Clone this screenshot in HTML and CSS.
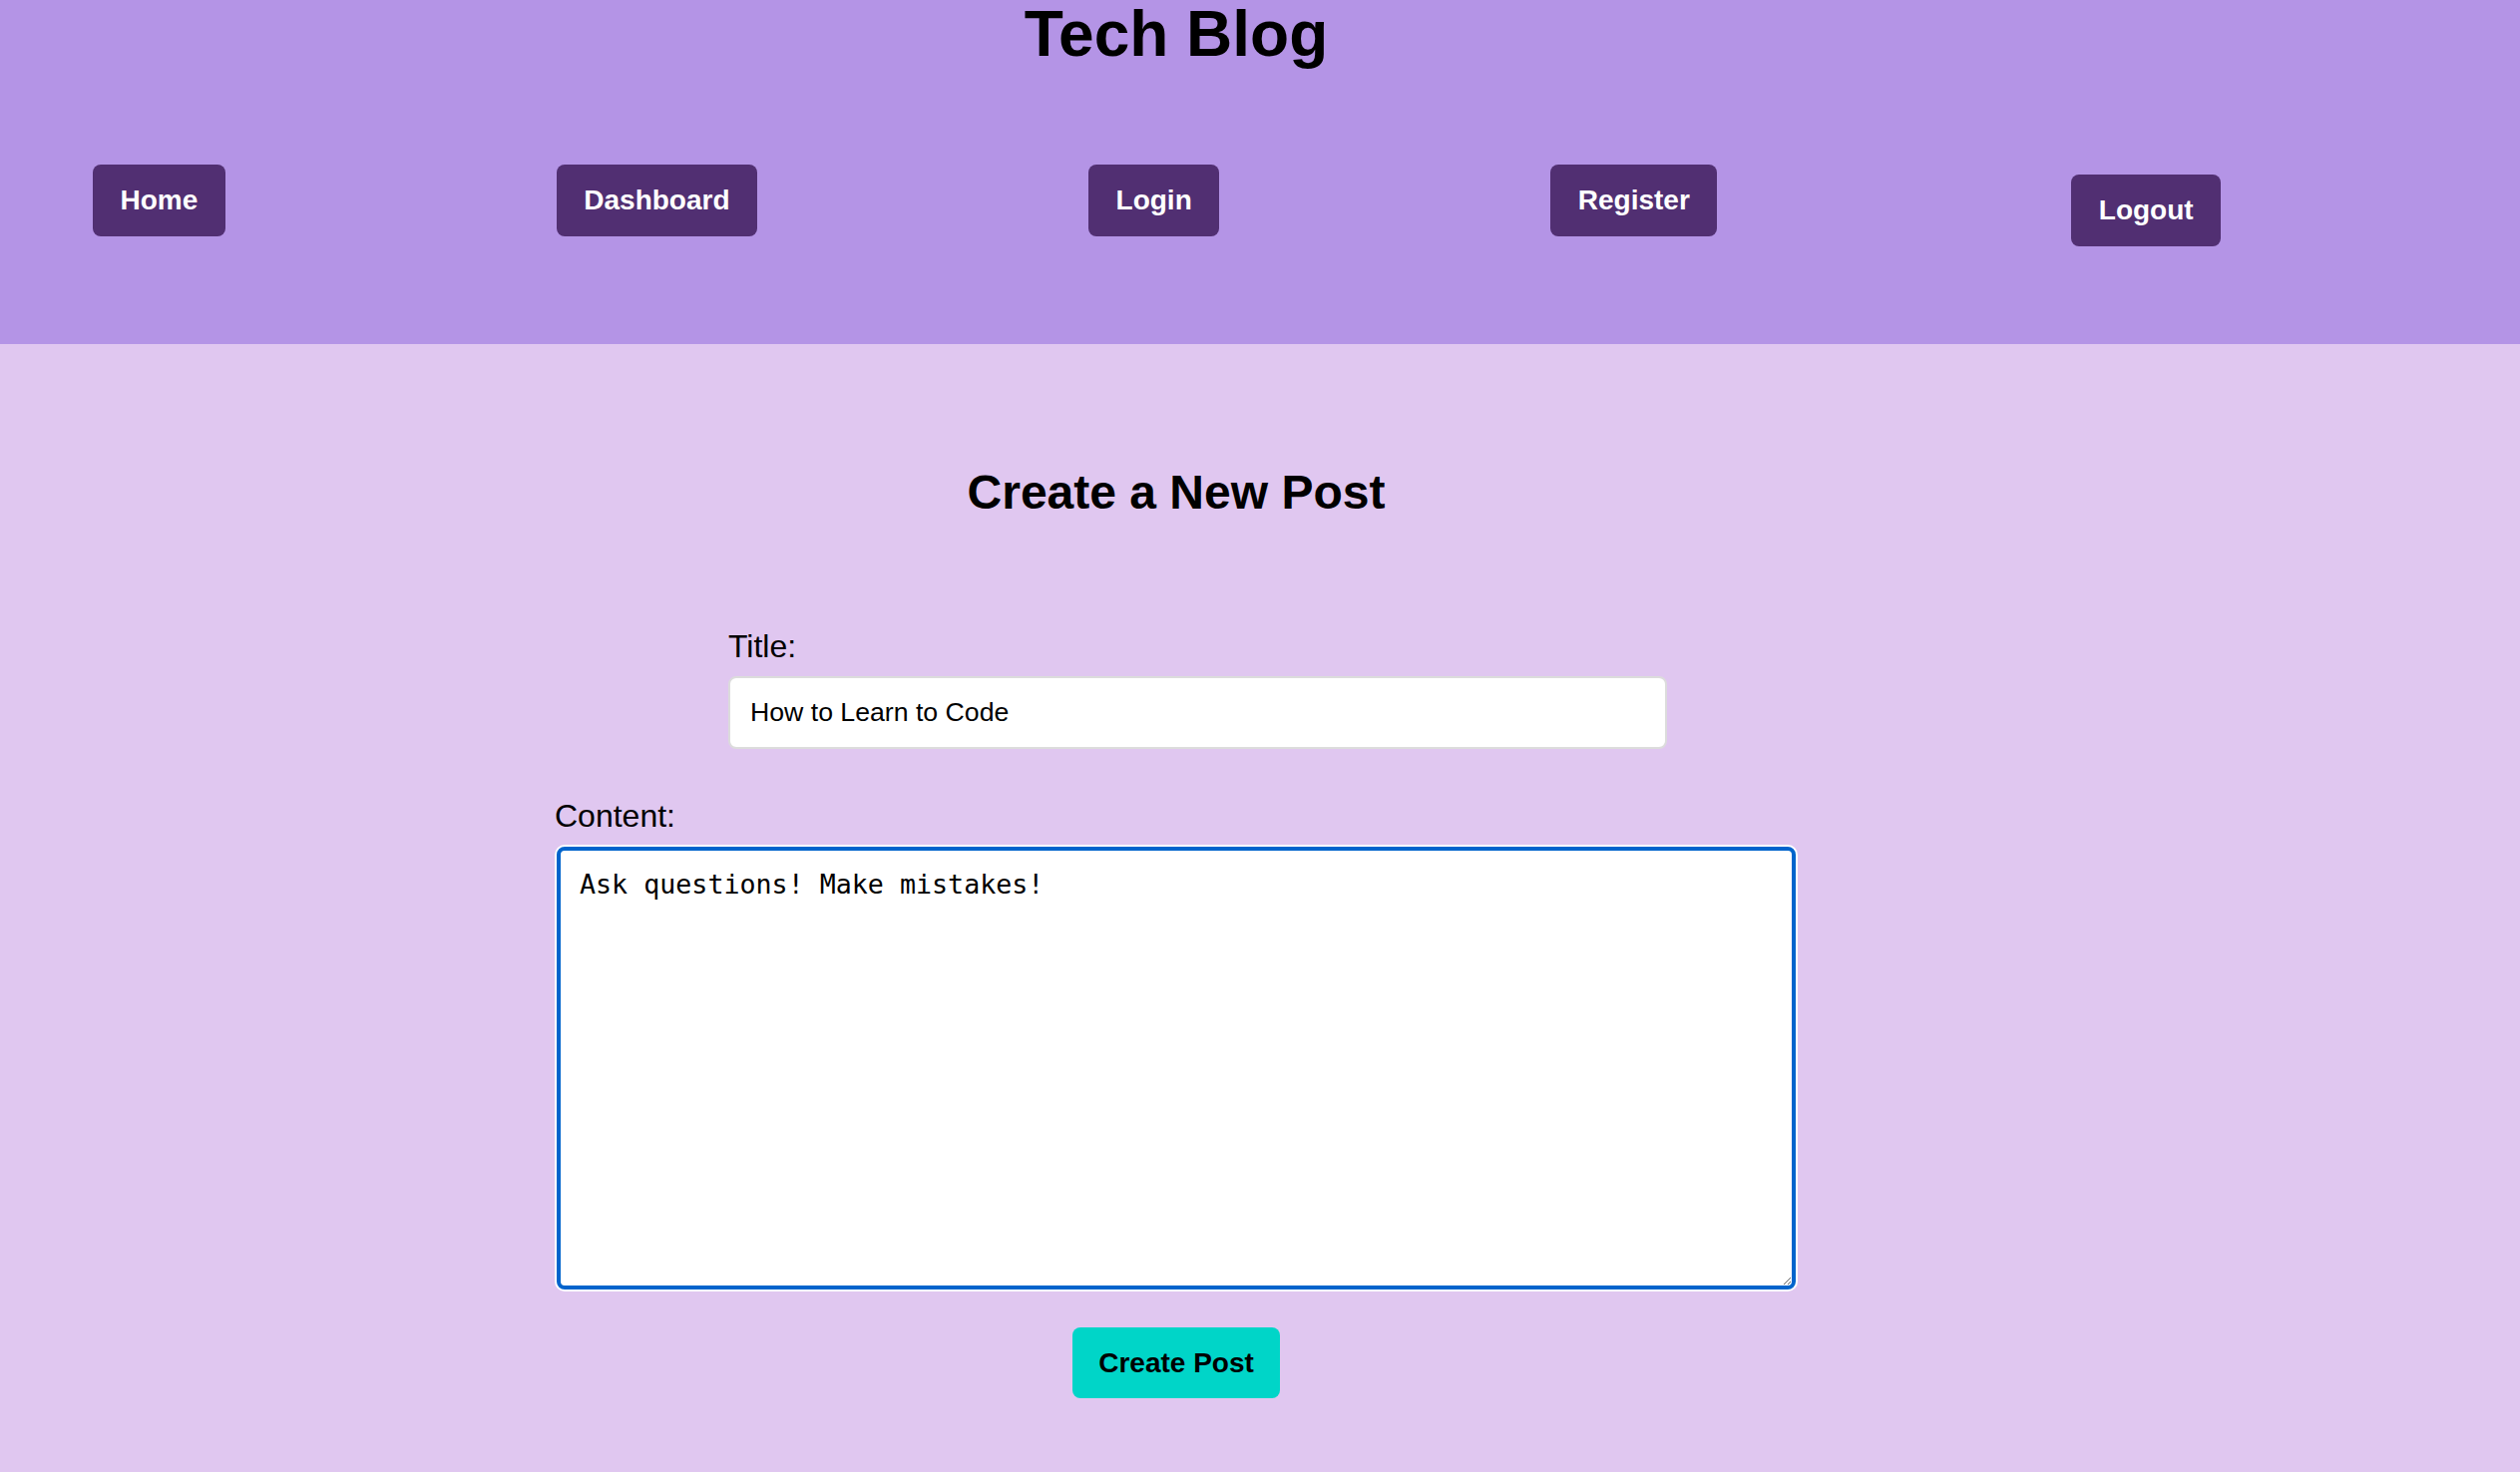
FILE: index.html
```html
<!DOCTYPE html>
<html lang="en">
<head>
<meta charset="utf-8">
<title>Tech Blog</title>
<link rel="stylesheet" href="styles.css">
</head>
<body>
<header class="site-header">
  <h1 class="site-title">Tech Blog</h1>
  <nav class="site-nav">
    <a class="nav-btn" href="#">Home</a>
    <a class="nav-btn" href="#">Dashboard</a>
    <a class="nav-btn" href="#">Login</a>
    <a class="nav-btn" href="#">Register</a>
    <form class="logout-form"><button class="nav-btn logout-btn" type="button">Logout</button></form>
  </nav>
</header>
<main class="page">
  <h2 class="page-title">Create a New Post</h2>
  <form class="post-form">
    <div class="field field-title">
      <label class="field-label" for="title">Title:</label>
      <input class="text-input" id="title" type="text" value="How to Learn to Code">
    </div>
    <div class="field field-content">
      <label class="field-label" for="content">Content:</label>
      <textarea class="text-area" id="content">Ask questions! Make mistakes!</textarea>
    </div>
    <button class="submit-btn" type="button">Create Post</button>
  </form>
</main>
</body>
</html>
```

FILE: styles.css
```css
html, body {
  margin: 0;
  padding: 0;
}
body {
  font-family: "Liberation Sans", Arial, Helvetica, sans-serif;
  background: #e0c7f0;
  color: #000;
  min-height: 1476px;
}
.site-header {
  background: #b494e6;
  height: 345px;
  box-sizing: border-box;
  display: flex;
  flex-direction: column;
}
.site-title {
  margin: 0;
  font-size: 64px;
  line-height: 68px;
  font-weight: bold;
  text-align: center;
  padding-right: 168px;
}
.site-nav {
  display: flex;
  align-items: flex-start;
  gap: 332px;
  padding-left: 93px;
  margin-top: 97px;
}
.nav-btn {
  display: inline-block;
  background: #512f72;
  color: #fff;
  font-family: "Liberation Sans", Arial, Helvetica, sans-serif;
  font-weight: bold;
  font-size: 28px;
  line-height: 32px;
  padding: 20px 27.5px;
  border: none;
  border-radius: 8px;
  text-decoration: none;
  cursor: pointer;
}
.logout-form {
  margin: 10px 0 0 23px;
}
.logout-btn {
  display: block;
}
.page {
  display: flex;
  flex-direction: column;
  align-items: center;
  padding: 121px 168px 0 0;
}
.page-title {
  margin: 0 0 109px;
  font-size: 48px;
  line-height: 55px;
  font-weight: bold;
}
.post-form {
  width: 1246px;
  display: flex;
  flex-direction: column;
  align-items: flex-start;
}
.field {
  display: flex;
  flex-direction: column;
  gap: 11px;
}
.field-title {
  margin-left: 174px;
  width: 941px;
}
.field-content {
  margin-top: 49px;
  width: 1246px;
  gap: 12px;
}
.field-label {
  font-size: 32px;
  line-height: 37px;
}
.text-input {
  box-sizing: border-box;
  width: 941px;
  height: 73px;
  margin: 0;
  padding: 0 20px;
  border: 2px solid #dcdcdc;
  border-radius: 8px;
  background: #fff;
  font-family: "Liberation Sans", Arial, Helvetica, sans-serif;
  font-size: 26.67px;
  color: #000;
  outline: none;
}
.text-area {
  box-sizing: border-box;
  width: 1242px;
  height: 444px;
  margin: 0 0 0 2px;
  padding: 18px 19px;
  border: 4px solid #0064cc;
  border-radius: 8px;
  box-shadow: 0 0 0 2px #fff;
  background: #fff;
  font-family: "DejaVu Sans Mono", "Liberation Mono", monospace;
  font-size: 26.67px;
  line-height: 31px;
  color: #000;
  outline: none;
}
.submit-btn {
  align-self: center;
  margin-top: 38px;
  background: #00d5c8;
  color: #000;
  font-family: "Liberation Sans", Arial, Helvetica, sans-serif;
  font-weight: bold;
  font-size: 28px;
  line-height: 31px;
  padding: 20px 26px;
  border: none;
  border-radius: 8px;
  cursor: pointer;
}
```
